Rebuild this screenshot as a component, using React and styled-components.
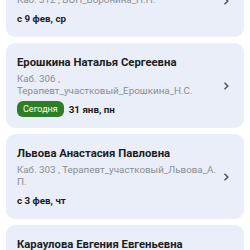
import React from 'react'
import styled, { createGlobalStyle } from 'styled-components'

const GlobalStyle = createGlobalStyle`
	body {
		margin: 0;
		background: #ffffff;
		font-family: Roboto, "Noto Sans", sans-serif;
	}
`

const Screen = styled.div`
	width: 250px;
	height: 250px;
	overflow: hidden;
`

const List = styled.div`
	display: flex;
	flex-direction: column;
	gap: 6px;
	padding: 0 6px;
	margin-top: -36px;
`

const Card = styled.div`
	display: flex;
	align-items: center;
	background: #e9eef9;
	border-radius: 9px;
	padding: 12px 13px 11px 11px;
`

const Body = styled.div`
	flex: 1;
	min-width: 0;
`

const Name = styled.div`
	font-size: 11.3px;
	font-weight: 700;
	line-height: 16px;
	color: #1d1d1f;
`

const Place = styled.div`
	margin-top: 2px;
	font-size: 9.8px;
	line-height: 12px;
	color: #8b8d92;
	overflow-wrap: break-word;
`

const DateRow = styled.div`
	display: flex;
	align-items: center;
	gap: 5px;
	margin-top: 4px;
	height: 16px;
`

const Today = styled.span`
	background: #2e7d27;
	color: #ffffff;
	font-size: 9px;
	line-height: 16px;
	padding: 0 6px;
	border-radius: 6px;
`

const DateText = styled.span`
	font-size: 9.8px;
	font-weight: 700;
	color: #1d1d1f;
`

const Chevron = styled.svg`
	flex: none;
	width: 10px;
	height: 10px;
	margin-left: 4px;
`

const doctors = [
	{ name: 'Воронина Наталья Николаевна', place: 'Каб. 312 , ВОП_Воронина_Н.Н.', date: 'с 9 фев, ср' },
	{ name: 'Ерошкина Наталья Сергеевна', place: 'Каб. 306 , Терапевт_участковый_Ерошкина_Н.С.', date: '31 янв, пн', today: true },
	{ name: 'Львова Анастасия Павловна', place: 'Каб. 303 , Терапевт_участковый_Львова_А.\u200BП.', date: 'с 3 фев, чт' },
	{ name: 'Караулова Евгения Евгеньевна', place: 'Каб. 301 , Терапевт_участковый_Караулова_Е.Е.', date: 'с 1 фев, вт' }
]

const App = () => (
	<Screen>
		<GlobalStyle />
		<List>
			{doctors.map((doc, index) => (
				<Card key={index}>
					<Body>
						<Name>{doc.name}</Name>
						<Place>{doc.place}</Place>
						<DateRow>
							{doc.today && <Today>Сегодня</Today>}
							<DateText>{doc.date}</DateText>
						</DateRow>
					</Body>
					<Chevron viewBox="0 0 10 10">
						<path d="M3.5 1.8 L6.8 5 L3.5 8.2" fill="none" stroke="#4a4c50" strokeWidth="1.4" />
					</Chevron>
				</Card>
			))}
		</List>
	</Screen>
)

export default App
